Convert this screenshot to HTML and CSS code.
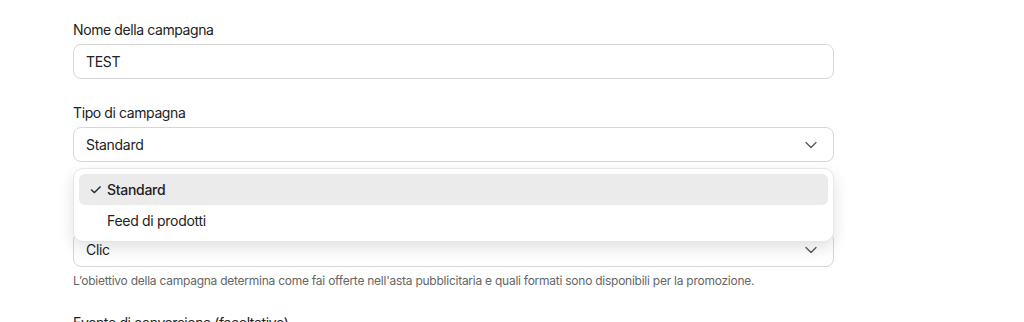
FILE: index.html
```html
<!DOCTYPE html>
<html>
<head>
    <title>Campagna</title>
    <link rel="stylesheet" href="styles.css">
</head>
<body>
    <div class="form">
        <div class="field">
            <label class="field-label">Nome della campagna</label>
            <div class="input">TEST</div>
        </div>

        <div class="field select-wrap">
            <label class="field-label">Tipo di campagna</label>
            <div class="input select">
                <span>Standard</span>
                <svg class="chevron" width="12" height="8" viewBox="0 0 12 8"><path d="M1 1.5 L6 6.5 L11 1.5" fill="none" stroke="#555" stroke-width="1.3" stroke-linecap="round" stroke-linejoin="round"/></svg>
            </div>
            <div class="help-space"></div>

            <div class="menu">
                <div class="menu-item selected"><span class="check">✓</span>Standard</div>
                <div class="menu-item">Feed di prodotti</div>
            </div>
        </div>

        <div class="field">
            <label class="field-label hidden-label"></label>
            <div class="input select">
                <span>Clic</span>
                <svg class="chevron" width="12" height="8" viewBox="0 0 12 8"><path d="M1 1.5 L6 6.5 L11 1.5" fill="none" stroke="#555" stroke-width="1.3" stroke-linecap="round" stroke-linejoin="round"/></svg>
            </div>
            <div class="help">L’obiettivo della campagna determina come fai offerte nell'asta pubblicitaria e quali formati sono disponibili per la promozione.</div>
        </div>

        <div class="field">
            <label class="field-label">Evento di conversione (facoltativo)</label>
            <div class="input select">
                <span></span>
            </div>
        </div>
    </div>
</body>
</html>
```

FILE: styles.css
```css
body {
    font-family: Inter, "Noto Sans", sans-serif;
    background-color: #fff;
    color: #222;
    margin: 0;
    padding: 0;
}
.form {
    width: 761px;
    padding: 20px 0 0 73px;
    display: flex;
    flex-direction: column;
    gap: 24px;
}
.field {
    display: flex;
    flex-direction: column;
}
.select-wrap {
    position: relative;
}
.field-label {
    font-size: 14px;
    line-height: 20px;
    height: 20px;
    margin-bottom: 4px;
    color: #222;
    letter-spacing: -0.4px;
}
.input {
    box-sizing: border-box;
    height: 35px;
    border: 1px solid #d6d6d6;
    border-radius: 8px;
    padding: 0 12px;
    font-size: 14px;
    letter-spacing: -0.3px;
    display: flex;
    align-items: center;
    color: #222;
}
.select {
    justify-content: space-between;
}
.chevron {
    margin-right: 4px;
}
.help {
    font-size: 12px;
    line-height: 16px;
    color: #666;
    margin-top: 6px;
    letter-spacing: -0.25px;
}
.help-space {
    height: 16px;
    margin-top: 6px;
}
.menu {
    position: absolute;
    top: 65px;
    left: 0;
    right: 0;
    background-color: white;
    border: 1px solid #e6e6e6;
    border-radius: 10px;
    box-shadow: 0 6px 16px rgba(0, 0, 0, 0.12);
    padding: 5px;
}
.menu-item {
    height: 31px;
    display: flex;
    align-items: center;
    padding-left: 28px;
    font-size: 14px;
    letter-spacing: -0.3px;
    border-radius: 6px;
    position: relative;
}
.menu-item.selected {
    background-color: #ebebeb;
    font-weight: 500;
}
.check {
    position: absolute;
    left: 10px;
    font-size: 15px;
    font-weight: 400;
}
```
